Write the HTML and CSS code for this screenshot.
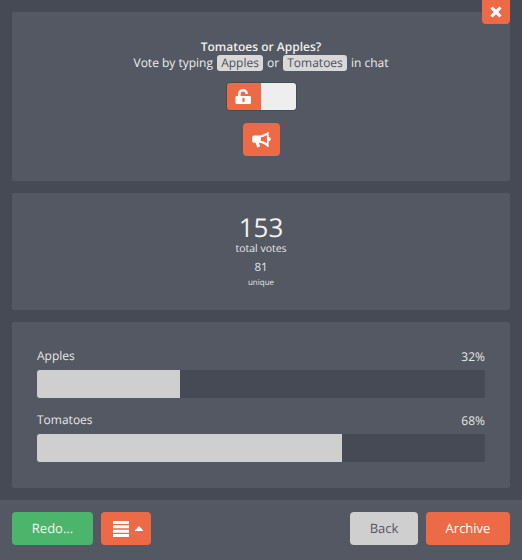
FILE: index.html
```html
<!DOCTYPE html>
<html lang="en">
<head>
<meta charset="utf-8">
<title>Poll</title>
<link rel="stylesheet" href="styles.css">
</head>
<body>
<div class="app">
  <button class="close" aria-label="Close">
    <svg width="12" height="12" viewBox="0 0 12 12"><path d="M2.6 0.4 6 3.8 9.4 0.4 11.6 2.6 8.2 6 11.6 9.4 9.4 11.6 6 8.2 2.6 11.6 0.4 9.4 3.8 6 0.4 2.6Z" fill="#fff"/></svg>
  </button>
  <main class="content">
    <section class="panel info">
      <h1 class="title">Tomatoes or Apples?</h1>
      <p class="hint">Vote by typing <span class="chip">Apples</span> or <span class="chip">Tomatoes</span> in chat</p>
      <div class="toggle">
        <span class="toggle-on">
          <svg width="17" height="16" viewBox="0 0 17 16"><path fill="#fff" fill-rule="evenodd" d="M3 7V5a5 5 0 0 1 10 0h-2.600a2.400 2.400 0 0 0-4.800 0v2h9.200a1.200 1.200 0 0 1 1.200 1.200v5.600a1.200 1.200 0 0 1-1.200 1.200H1.700a1.200 1.200 0 0 1-1.200-1.200V8.200A1.200 1.200 0 0 1 1.700 7ZM7.500 10.600V13h2v-2.400a1.200 1.200 0 1 0-2 0Z"/></svg>
        </span>
        <span class="toggle-off"></span>
      </div>
      <button class="announce" aria-label="Announce">
        <svg width="19" height="16" viewBox="0 0 21 18"><path fill="#fff" fill-rule="evenodd" d="M17 0h1.500v5.500a2.500 2.500 0 0 1 0 5V17H17l-.7-1.200C14 13.500 11 12.200 7.500 12L9 16.700 5.700 17.500 3.800 12H2a2 2 0 0 1-2-2V6a2 2 0 0 1 2-2h6c3.500-.2 6-1.500 8.300-2.800ZM16.600 3.300C14.500 4.700 12 5.600 9.800 5.900v4.300c2.300.3 4.700 1.200 6.800 2.600Z"/></svg>
      </button>
    </section>
    <section class="panel totals">
      <div class="total-num">153</div>
      <div class="total-label">total votes</div>
      <div class="unique-num">81</div>
      <div class="unique-label">unique</div>
    </section>
    <section class="panel results">
      <div class="result">
        <div class="result-head"><span>Apples</span><span class="pct">32%</span></div>
        <div class="track"><div class="fill fill-apples"></div></div>
      </div>
      <div class="result">
        <div class="result-head"><span>Tomatoes</span><span class="pct">68%</span></div>
        <div class="track"><div class="fill fill-tomatoes"></div></div>
      </div>
    </section>
  </main>
  <footer class="footer">
    <button class="btn btn-green">Redo...</button>
    <button class="btn btn-orange btn-menu" aria-label="Menu">
      <svg width="16" height="16" viewBox="0 0 16 16"><path fill="#fff" d="M0 0h16v3H0zM0 4.330h16v3H0zM0 8.670h16v3H0zM0 13h16v3H0z"/></svg>
      <svg width="8" height="5" viewBox="0 0 8 5"><path fill="#fff" d="M4 0 8 4.200V5H0V4.200Z"/></svg>
    </button>
    <span class="spacer"></span>
    <button class="btn btn-grey">Back</button>
    <button class="btn btn-orange btn-archive">Archive</button>
  </footer>
</div>
</body>
</html>
```
FILE: styles.css
```css
* { box-sizing: border-box; }
html, body { margin: 0; padding: 0; }
body {
  width: 522px;
  height: 560px;
  overflow: hidden;
  background: #464a55;
  font-family: "Open Sans", sans-serif;
  color: #eee;
  text-rendering: geometricPrecision;
}
.app { position: relative; width: 522px; height: 560px; display: flex; flex-direction: column; }
button { font-family: inherit; border: 0; padding: 0; cursor: pointer; text-rendering: geometricPrecision; }
.close {
  position: absolute; top: 0; right: 12px;
  width: 28px; height: 24px;
  background: #ec6a46;
  border-radius: 0 0 4px 4px;
  display: flex; align-items: center; justify-content: center;
}
.content {
  flex: 1;
  padding: 12px;
  display: flex; flex-direction: column; gap: 12px;
}
.panel { background: #535863; border-radius: 2px; }
.info { height: 169px; padding-top: 27px; display: flex; flex-direction: column; align-items: center; }
.title { margin: 0; font-size: 12px; line-height: 16px; font-weight: 600; color: #eee; }
.hint { margin: 0; font-size: 12px; line-height: 16px; color: #eee; }
.chip {
  display: inline-block;
  background: #d9d9d9;
  color: #4c505b;
  padding: 0 4px;
  border-radius: 3px;
  line-height: 16px;
  margin: 0 1px;
}
.toggle {
  margin-top: 11px;
  width: 71px; height: 29px;
  display: flex;
  border: 1px solid #464a55;
  border-radius: 4px;
  overflow: hidden;
}
.toggle-on { width: 34px; background: #ec6a46; display: flex; align-items: center; justify-content: center; }
.toggle-off { flex: 1; background: #eee; }
.announce {
  margin-top: 12px;
  width: 37px; height: 33px;
  background: #ec6a46;
  border-radius: 4px;
  display: flex; align-items: center; justify-content: center;
}
.totals { height: 117px; padding-top: 19px; display: flex; flex-direction: column; align-items: center; }
.total-num { font-size: 26px; line-height: 30px; color: #f2f2f2; }
.total-label { font-size: 10.5px; line-height: 15px; color: #e6e6e6; }
.unique-num { margin-top: 3px; font-size: 11.5px; line-height: 16px; color: #e6e6e6; }
.unique-label { margin-top: 1px; font-size: 8px; line-height: 12px; color: #e6e6e6; }
.results { height: 166px; padding: 26px 25px 0; display: flex; flex-direction: column; gap: 14px; }
.result-head { display: flex; justify-content: space-between; font-size: 12px; line-height: 16px; height: 22px; color: #e6e6e6; }
.pct { font-size: 12px; padding-top: 1px; }
.track { height: 28px; background: #464a55; border-radius: 2px; overflow: hidden; }
.fill { height: 100%; background: #cfcfcf; border-radius: 2px 0 0 2px; }
.fill-apples { width: 143px; }
.fill-tomatoes { width: 305px; }
.footer {
  height: 60px;
  background: #535863;
  padding: 12px 12px 15px;
  display: flex; gap: 8px;
}
.spacer { flex: 1; }
.btn { height: 33px; border-radius: 4px; font-size: 13px; padding-bottom: 2px; display: flex; align-items: center; justify-content: center; }
.btn-green { width: 81px; background: #4ab56b; color: #f2f2f2; }
.btn-orange { background: #ec6a46; color: #fff; }
.btn-menu { width: 50px; gap: 6px; padding: 0 0 0 4px; }
.btn-grey { width: 68px; background: #cfcfcf; color: #53575f; }
.btn-archive { width: 84px; }
```
